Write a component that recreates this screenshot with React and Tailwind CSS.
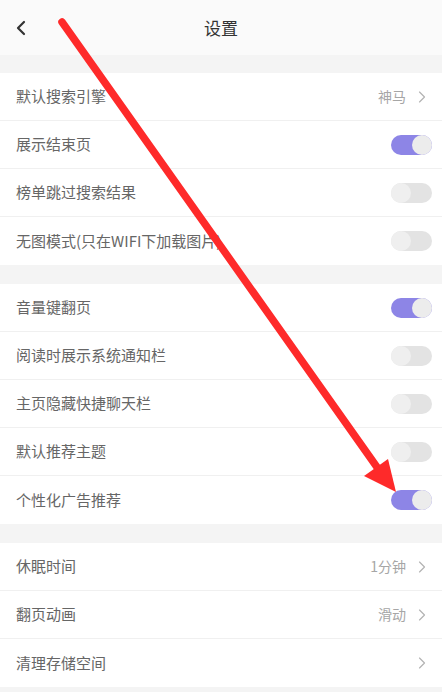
import { ChevronLeft, ChevronRight } from "lucide-react";

const sections = [
  [
    { label: "默认搜索引擎", value: "神马" },
    { label: "展示结束页", toggle: true },
    { label: "榜单跳过搜索结果", toggle: false },
    { label: "无图模式(只在WIFI下加载图片)", toggle: false },
  ],
  [
    { label: "音量键翻页", toggle: true },
    { label: "阅读时展示系统通知栏", toggle: false },
    { label: "主页隐藏快捷聊天栏", toggle: false },
    { label: "默认推荐主题", toggle: false },
    { label: "个性化广告推荐", toggle: true },
  ],
  [
    { label: "休眠时间", value: "1分钟" },
    { label: "翻页动画", value: "滑动" },
    { label: "清理存储空间", value: "" },
  ],
];

function Toggle({ on }) {
  return (
    <div
      className={`w-[41px] h-[20px] rounded-full flex items-center ${
        on ? "bg-[#8d85e6] justify-end" : "bg-[#e3e3e3] justify-start"
      }`}
    >
      <div className={`w-[20px] h-[20px] rounded-full ${on ? "bg-[#ececec]" : "bg-[#efefef]"}`} />
    </div>
  );
}

function Row({ item, last }) {
  return (
    <div
      className={`h-12 flex items-center justify-between pl-4 pr-[10px] bg-white ${
        last ? "" : "border-b border-[#f0f0f0]"
      }`}
    >
      <span className="text-[15px] text-[#666]">{item.label}</span>
      {item.toggle !== undefined ? (
        <Toggle on={item.toggle} />
      ) : (
        <div className="flex items-center gap-[6px] text-[14px] text-[#a6a6a6]">
          {item.value && <span>{item.value}</span>}
          <ChevronRight size={20} strokeWidth={1.4} className="text-[#b3b3b3]" />
        </div>
      )}
    </div>
  );
}

export default function App() {
  return (
    <div
      className="relative w-[442px] h-[692px] overflow-hidden bg-[#f4f4f4]"
      style={{ fontFamily: '"Noto Sans CJK SC", "Noto Sans", sans-serif' }}
    >
      {/* HEADER */}
      <div className="h-[55px] bg-[#fafafa] flex items-center relative">
        <ChevronLeft size={24} strokeWidth={2.2} className="text-[#333] ml-[9px]" />
        <span className="absolute left-0 right-0 text-center text-[17px] text-[#333]">设置</span>
      </div>

      <div className="flex flex-col gap-[19px] pt-[18px]">
        {sections.map((sec, i) => (
          <div key={i} className="flex flex-col">
            {sec.map((item, j) => (
              <Row key={j} item={item} last={j === sec.length - 1} />
            ))}
          </div>
        ))}
      </div>

      {/* RED ARROW annotation */}
      <svg className="absolute inset-0 pointer-events-none" width="442" height="692">
        <line x1="62" y1="22" x2="379" y2="470" stroke="#fe2a2a" strokeWidth="7.5" strokeLinecap="round" />
        <polygon points="396,492 364,476 388,459" fill="#fe2a2a" />
      </svg>
    </div>
  );
}
